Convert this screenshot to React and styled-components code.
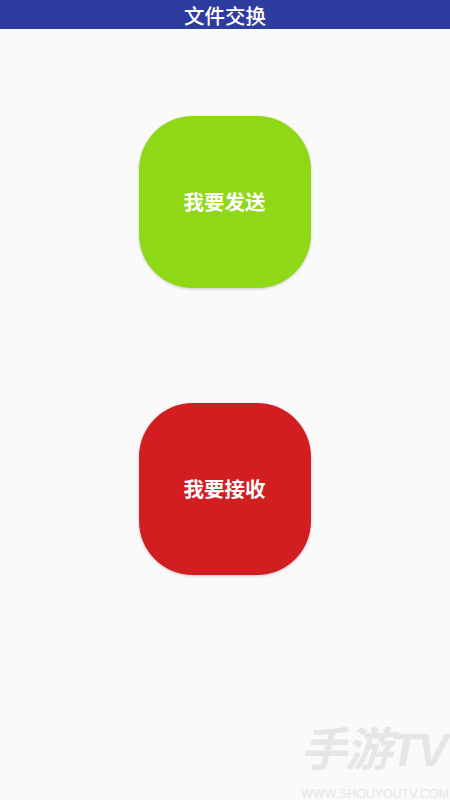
import styled, { createGlobalStyle } from "styled-components";

const GlobalStyle = createGlobalStyle`
  html,
  body {
    margin: 0;
    padding: 0;
    background-color: #fafafa;
  }
`;

const cjk = `"Roboto", "Noto Sans CJK SC", sans-serif`;

const Page = styled.div`
  position: relative;
  width: 450px;
  height: 800px;
  overflow: hidden;
  background-color: #fafafa;
  font-family: ${cjk};
`;

const Header = styled.header`
  display: flex;
  align-items: center;
  justify-content: center;
  height: 29px;
  background-color: #2f3c9f;
  color: #ffffff;
  font-size: 20.5px;
  font-weight: 500;
`;

const Content = styled.main`
  display: flex;
  flex-direction: column;
  align-items: center;
  gap: 115px;
  padding-top: 87px;
`;

const BigButton = styled.button`
  display: flex;
  align-items: center;
  justify-content: center;
  width: 172px;
  height: 172px;
  padding: 0 1px 2px 0;
  border: none;
  border-radius: 54px;
  background-color: ${(props) => props.$color};
  box-shadow: 0 1px 3px rgba(0, 0, 0, 0.2);
  color: #ffffff;
  font-family: ${cjk};
  font-size: 20.5px;
  font-weight: 700;
`;

const Watermark = styled.div`
  position: absolute;
  right: 0;
  bottom: 0;
  display: flex;
  flex-direction: column;
  align-items: center;
  width: 150px;
  color: #e6e6e6;
`;

const WatermarkTitle = styled.div`
  margin-bottom: 8px;
  padding-right: 3px;
  font-family: "Liberation Sans", "Noto Sans CJK SC", sans-serif;
  font-size: 46.5px;
  font-style: italic;
  font-weight: 700;
  letter-spacing: -1.5px;
  line-height: 60px;
  white-space: nowrap;
`;

const WatermarkUrl = styled.div`
  font-family: "Liberation Sans", sans-serif;
  font-size: 12.4px;
  line-height: 12px;
  white-space: nowrap;
`;

export default function App() {
  return (
    <Page>
      <GlobalStyle />
      <Header>文件交换</Header>
      <Content>
        <BigButton $color="#8ed816">我要发送</BigButton>
        <BigButton $color="#d21e20">我要接收</BigButton>
      </Content>
      <Watermark>
        <WatermarkTitle>手游TV</WatermarkTitle>
        <WatermarkUrl>WWW.SHOUYOUTV.COM</WatermarkUrl>
      </Watermark>
    </Page>
  );
}
